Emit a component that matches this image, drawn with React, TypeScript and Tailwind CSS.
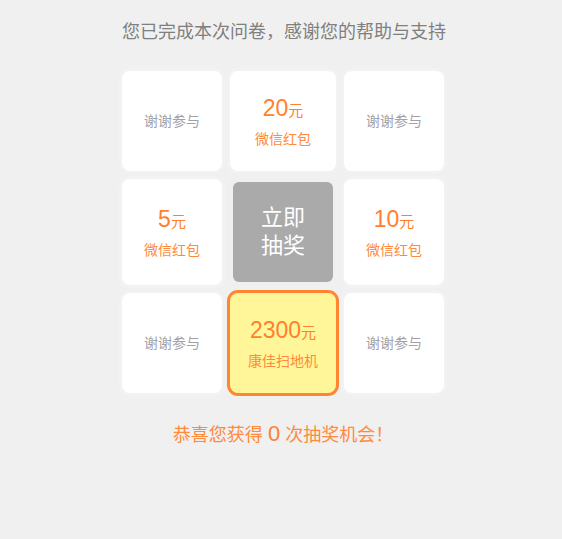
import React from "react";

const FONT = { fontFamily: '"Liberation Sans", "Noto Sans CJK SC", sans-serif' };

function Thanks() {
  return (
    <div className="bg-white rounded-lg shadow-[0_0_0_3px_#f2f2f2] flex items-center justify-center">
      <span className="text-[14px] leading-[20px] text-[#a2a2a6]">谢谢参与</span>
    </div>
  );
}

function Prize({ amount, label, active }: { amount: string; label: string; active?: boolean }) {
  return (
    <div
      className={
        active
          ? "bg-[#fff699] rounded-lg shadow-[0_0_0_3px_#ff8533] flex flex-col items-center justify-center"
          : "bg-white rounded-lg shadow-[0_0_0_3px_#f2f2f2] flex flex-col items-center justify-center"
      }
    >
      <div className="leading-[28px] text-[#ff7f2e]">
        <span className="text-[23px]">{amount}</span>
        <span className="text-[15px]">元</span>
      </div>
      <div className="mt-[4px] text-[14px] leading-[20px] text-[#ff8a3d]">{label}</div>
    </div>
  );
}

export default function App() {
  return (
    <div className="min-h-[539px] w-full bg-[#f0f0f0]" style={FONT}>
      <div className="w-[322px] ml-[122px] pt-[19px] flex flex-col">
        <div className="text-center text-[18px] leading-[27px] text-[#7f7f7f] whitespace-nowrap">
          您已完成本次问卷，感谢您的帮助与支持
        </div>
        <div className="mt-[25px] grid grid-cols-[100px_106px_100px] grid-rows-[100px_106px_100px] gap-2">
          <Thanks />
          <Prize amount="20" label="微信红包" />
          <Thanks />
          <Prize amount="5" label="微信红包" />
          <div className="p-[3px] flex">
            <div className="flex-1 bg-[#aaaaaa] rounded-md flex items-center justify-center text-center text-white text-[22px] leading-[28px]">
              立即<br />抽奖
            </div>
          </div>
          <Prize amount="10" label="微信红包" />
          <Thanks />
          <Prize amount="2300" label="康佳扫地机" active />
          <Thanks />
        </div>
        <div className="mt-[27px] text-center text-[18px] leading-[27px] text-[#ff8a3d] whitespace-nowrap">
          恭喜您获得 <span className="text-[22px] leading-[27px] text-[#ff8030]">0</span> 次抽奖机会！
        </div>
      </div>
    </div>
  );
}
